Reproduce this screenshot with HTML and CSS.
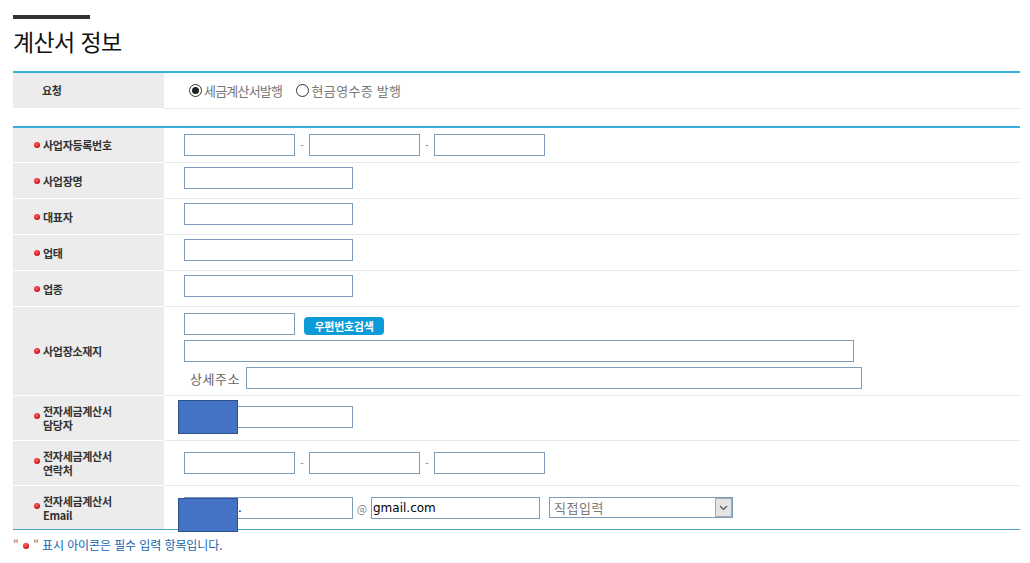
FILE: index.html
```html
<!DOCTYPE html>
<html lang="ko">
<head>
<meta charset="utf-8">
<link rel="stylesheet" href="styles.css">
</head>
<body>
<div class="page">
  <div class="bar"></div>
  <h2 class="title">계산서 정보</h2>

  <table class="tbl tbl-top">
    <tr>
      <th class="lbl lbl-center">요청</th>
      <td class="val">
        <label class="radio"><span class="rb on"></span>세금계산서발행</label>
        <label class="radio radio-2"><span class="rb"></span>현금영수증 발행</label>
      </td>
    </tr>
  </table>

  <table class="tbl tbl-main">
    <tr class="r36">
      <th class="lbl"><span class="dot"></span>사업자등록번호</th>
      <td class="val">
        <div class="line">
          <span class="inp w111"></span><span class="dash">-</span><span class="inp w111"></span><span class="dash">-</span><span class="inp w111"></span>
        </div>
      </td>
    </tr>
    <tr class="r36">
      <th class="lbl"><span class="dot"></span>사업장명</th>
      <td class="val"><span class="inp w169"></span></td>
    </tr>
    <tr class="r36">
      <th class="lbl"><span class="dot"></span>대표자</th>
      <td class="val"><span class="inp w169"></span></td>
    </tr>
    <tr class="r36">
      <th class="lbl"><span class="dot"></span>업태</th>
      <td class="val"><span class="inp w169"></span></td>
    </tr>
    <tr class="r36">
      <th class="lbl"><span class="dot"></span>업종</th>
      <td class="val"><span class="inp w169"></span></td>
    </tr>
    <tr class="r89">
      <th class="lbl"><span class="dot"></span>사업장소재지</th>
      <td class="val">
        <div class="addr">
          <div class="line"><span class="inp w111"></span><span class="btn">우편번호검색</span></div>
          <div class="line"><span class="inp w670"></span></div>
          <div class="line"><span class="sub">상세주소</span><span class="inp w616"></span></div>
        </div>
      </td>
    </tr>
    <tr class="r45">
      <th class="lbl lbl-two"><span class="dot"></span><span>전자세금계산서<br>담당자</span></th>
      <td class="val mask-host shift"><span class="inp w169"></span><span class="mask mask-a"></span></td>
    </tr>
    <tr class="r45">
      <th class="lbl lbl-two"><span class="dot"></span><span>전자세금계산서<br>연락처</span></th>
      <td class="val">
        <div class="line">
          <span class="inp w111"></span><span class="dash">-</span><span class="inp w111"></span><span class="dash">-</span><span class="inp w111"></span>
        </div>
      </td>
    </tr>
    <tr class="r44 last">
      <th class="lbl lbl-two"><span class="dot"></span><span>전자세금계산서<br>Email</span></th>
      <td class="val mask-host">
        <div class="line">
          <span class="inp w169 txt tail">.</span><span class="at">@</span><span class="inp w169 txt">gmail.com</span>
          <span class="sel"><span class="sel-txt">직접입력</span><span class="sel-btn"><svg width="9" height="6" viewBox="0 0 9 6"><path d="M1 1 L4.5 4.5 L8 1" fill="none" stroke="#555" stroke-width="1.2"/></svg></span></span>
        </div>
        <span class="mask mask-b"></span>
      </td>
    </tr>
  </table>

  <p class="note"><span class="q">"</span> <span class="dot dot-note"></span> <span class="q">"</span> 표시 아이콘은 필수 입력 항목입니다.</p>
</div>
</body>
</html>
```

FILE: styles.css
```css
* { box-sizing: border-box; }
html, body { margin: 0; padding: 0; background: #fff; }
body {
  font-family: "Noto Sans CJK KR", "DejaVu Sans", sans-serif;
  color: #333;
  width: 1030px;
  height: 563px;
  overflow: hidden;
}
.page { padding: 15px 10px 0 13px; }
.bar { width: 77px; height: 4px; background: #333; }
.title {
  margin: 7px 0 0;
  font-size: 23px;
  line-height: 30px;
  font-weight: 400;
  color: #111;
  letter-spacing: -0.6px;
}
.tbl {
  width: 1007px;
  border-collapse: collapse;
  table-layout: fixed;
}
.tbl-top { margin-top: 15px; border-top: 2px solid #37aedb; }
.tbl-top tr { height: 36px; }
.tbl-top td { border-bottom: 1px solid #e8e8e8; }
.tbl-top th { border-bottom: 1px solid #fff; }
.tbl-main { margin-top: 17px; border-top: 2px solid #37aedb; }
.lbl {
  width: 151px;
  background: #ececec;
  text-align: left;
  font-size: 11px;
  font-weight: 700;
  color: #333;
  padding: 0 0 0 21px;
  border-bottom: 1px solid #fff;
  white-space: nowrap;
  line-height: 14px;
  letter-spacing: -0.3px;
}
.lbl-center { text-align: left; padding-left: 29px; }
.lbl-two span:last-child { display: inline-block; vertical-align: middle; }
.val {
  padding: 0 0 0 20px;
  border-bottom: 1px solid #e8e8e8;
  vertical-align: middle;
}
.shift { padding-top: 3px; }
.r36 { height: 36px; }
.r89 { height: 89px; }
.r45 { height: 45px; }
.r44 { height: 44px; }
.last th, .last td { border-bottom: 1px solid #4aa3cb; }
.dot {
  display: inline-block;
  width: 6px;
  height: 6px;
  border-radius: 50%;
  background: radial-gradient(circle at 40% 35%, #ff6a6a 0, #d8141c 60%, #a50d12 100%);
  margin-right: 3px;
  vertical-align: middle;
  position: relative;
  top: -2px;
}
.line { display: flex; align-items: center; }
.inp {
  display: inline-block;
  height: 22px;
  border: 1px solid #7d9dba;
  background: #fff;
  flex: none;
}
.w111 { width: 111px; }
.w169 { width: 169px; }
.w670 { width: 670px; }
.w616 { width: 616px; }
.dash {
  width: 14px;
  text-align: center;
  font-size: 11px;
  color: #888;
}
.radio {
  display: inline-flex;
  align-items: center;
  font-size: 13px;
  color: #777;
  margin-left: 5px;
  margin-right: 5px;
  letter-spacing: -0.8px;
}
.radio-2 { margin-left: 4px; letter-spacing: 0.3px; }
.rb {
  width: 13px;
  height: 13px;
  border: 1px solid #333;
  border-radius: 50%;
  margin-right: 2px;
  position: relative;
  background: #fff;
}
.radio-2 .rb { margin-right: 3px; }
.rb.on::after {
  content: "";
  position: absolute;
  left: 2px; top: 2px;
  width: 7px; height: 7px;
  border-radius: 50%;
  background: #222;
}
.addr { display: flex; flex-direction: column; gap: 5px; }
.btn {
  margin-left: 9px;
  width: 80px;
  height: 18px;
  margin-top: 3px;
  background: #0b9bd8;
  border-radius: 4px;
  color: #fff;
  font-size: 11px;
  font-weight: 700;
  display: flex;
  align-items: center;
  justify-content: center;
  letter-spacing: -0.3px;
}
.sub {
  width: 62px;
  padding-left: 6px;
  font-size: 13px;
  color: #666;
  letter-spacing: 0.5px;
}
.txt {
  font-family: "DejaVu Sans", sans-serif;
  font-size: 12px;
  color: #000;
  line-height: 20px;
  padding-left: 1px;
}
.tail { padding-left: 53px; }
.at { width: 18px; text-align: center; font-size: 11px; color: #888; }
.sel {
  margin-left: 9px;
  width: 184px;
  height: 21px;
  border: 1px solid #7d9dba;
  display: flex;
  align-items: stretch;
}
.sel-txt {
  flex: 1;
  font-size: 13px;
  color: #777;
  line-height: 19px;
  padding-left: 4px;
  letter-spacing: 0.5px;
}
.sel-btn {
  width: 17px;
  background: #e4e4e4;
  border: 1px solid #aaa;
  display: flex;
  align-items: center;
  justify-content: center;
}
.mask-host { position: relative; }
.mask {
  position: absolute;
  left: 14px;
  width: 60px;
  height: 34px;
  background: #4472c4;
  border: 1px solid #2f528f;
}
.mask-a { top: 4px; }
.mask-b { top: 12px; }
.note {
  margin: 6px 0 0;
  font-size: 12px;
  color: #1565ad;
  letter-spacing: -0.1px;
}
.q { color: #777; }
.dot-note { margin: 0 1px; top: -1px; }
```
